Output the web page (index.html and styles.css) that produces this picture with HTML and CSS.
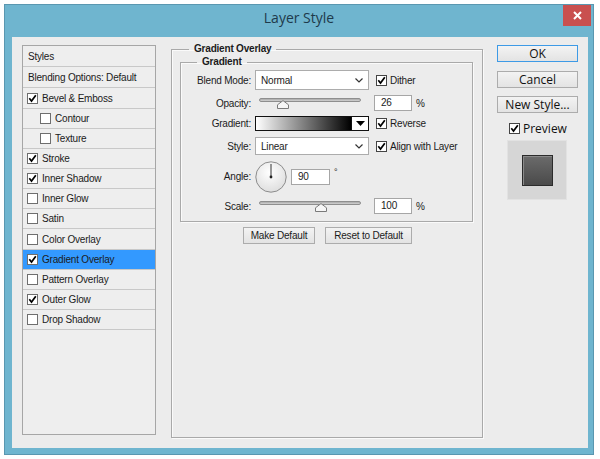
FILE: index.html
```html
<!DOCTYPE html>
<html>
<head>
<meta charset="utf-8">
<title>Layer Style</title>
<link rel="stylesheet" href="styles.css">
</head>
<body>
<div class="window">
  <div class="titlebar">
    <div></div>
    <div class="title">Layer Style</div>
    <div class="close"><svg width="9" height="9" viewBox="0 0 9 9"><path d="M1 1 L8 8 M8 1 L1 8" stroke="#fff" stroke-width="2"/></svg></div>
  </div>
  <div class="content">
    <div class="styles-list">
      <div class="row h21">Styles</div>
      <div class="row h21">Blending Options: Default</div>
      <div class="row h21 cbrow"><span class="cb"><svg width="9" height="9" viewBox="0 0 9 9"><path d="M1.3 4.3 L3.5 7 L7.8 1.2" stroke="#000" stroke-width="1.7" fill="none"/></svg></span>Bevel &amp; Emboss</div>
      <div class="row cbrow sub"><span class="cb"></span>Contour</div>
      <div class="row cbrow sub"><span class="cb"></span>Texture</div>
      <div class="row cbrow"><span class="cb"><svg width="9" height="9" viewBox="0 0 9 9"><path d="M1.3 4.3 L3.5 7 L7.8 1.2" stroke="#000" stroke-width="1.7" fill="none"/></svg></span>Stroke</div>
      <div class="row cbrow"><span class="cb"><svg width="9" height="9" viewBox="0 0 9 9"><path d="M1.3 4.3 L3.5 7 L7.8 1.2" stroke="#000" stroke-width="1.7" fill="none"/></svg></span>Inner Shadow</div>
      <div class="row cbrow"><span class="cb"></span>Inner Glow</div>
      <div class="row cbrow"><span class="cb"></span>Satin</div>
      <div class="row h21 cbrow"><span class="cb"></span>Color Overlay</div>
      <div class="row cbrow selected"><span class="cb"><svg width="9" height="9" viewBox="0 0 9 9"><path d="M1.3 4.3 L3.5 7 L7.8 1.2" stroke="#000" stroke-width="1.7" fill="none"/></svg></span>Gradient Overlay</div>
      <div class="row cbrow"><span class="cb"></span>Pattern Overlay</div>
      <div class="row cbrow"><span class="cb"><svg width="9" height="9" viewBox="0 0 9 9"><path d="M1.3 4.3 L3.5 7 L7.8 1.2" stroke="#000" stroke-width="1.7" fill="none"/></svg></span>Outer Glow</div>
      <div class="row cbrow"><span class="cb"></span>Drop Shadow</div>
    </div>

    <fieldset class="panel">
      <legend>Gradient Overlay</legend>
      <fieldset class="group">
        <legend>Gradient</legend>
        <div class="frow r1">
          <div class="lbl">Blend Mode:</div>
          <div class="select"><span>Normal</span><svg width="8" height="5" viewBox="0 0 8 5"><path d="M0.5 0.5 L4 4 L7.5 0.5" stroke="#333" stroke-width="1.2" fill="none"/></svg></div>
          <div class="check"><span class="cb dark"><svg width="9" height="9" viewBox="0 0 9 9"><path d="M1.3 4.3 L3.5 7 L7.8 1.2" stroke="#000" stroke-width="1.7" fill="none"/></svg></span>Dither</div>
        </div>
        <div class="frow r2">
          <div class="lbl">Opacity:</div>
          <div class="slider"><div class="track"></div><svg class="thumb t-op" width="12" height="9" viewBox="0 0 12 9"><path d="M0.5 8.5 V4.8 L6 0.6 L11.5 4.8 V8.5 Z" fill="#f6f6f6" stroke="#7a7a7a"/></svg></div>
          <div class="field num">26</div>
          <div class="unit">%</div>
        </div>
        <div class="frow r3">
          <div class="lbl">Gradient:</div>
          <div class="grad"><div class="grad-fill"></div><div class="grad-btn"><svg width="9" height="5" viewBox="0 0 9 5"><path d="M0 0 H9 L4.5 5 Z" fill="#000"/></svg></div></div>
          <div class="check"><span class="cb dark"><svg width="9" height="9" viewBox="0 0 9 9"><path d="M1.3 4.3 L3.5 7 L7.8 1.2" stroke="#000" stroke-width="1.7" fill="none"/></svg></span>Reverse</div>
        </div>
        <div class="frow r4">
          <div class="lbl">Style:</div>
          <div class="select"><span>Linear</span><svg width="8" height="5" viewBox="0 0 8 5"><path d="M0.5 0.5 L4 4 L7.5 0.5" stroke="#333" stroke-width="1.2" fill="none"/></svg></div>
          <div class="check"><span class="cb dark"><svg width="9" height="9" viewBox="0 0 9 9"><path d="M1.3 4.3 L3.5 7 L7.8 1.2" stroke="#000" stroke-width="1.7" fill="none"/></svg></span>Align with Layer</div>
        </div>
        <div class="frow r5">
          <div class="lbl">Angle:</div>
          <svg class="dial" width="32" height="32" viewBox="0 0 32 32">
            <defs><radialGradient id="dg" cx="0.45" cy="0.35" r="0.7"><stop offset="0" stop-color="#ffffff"/><stop offset="1" stop-color="#dcdcdc"/></radialGradient></defs>
            <circle cx="16" cy="16" r="15.2" fill="url(#dg)" stroke="#8c8c8c"/>
            <path d="M16 16 V3" stroke="#333" stroke-width="1"/>
            <circle cx="16" cy="16" r="1.4" fill="#222"/>
          </svg>
          <div class="field angle">90</div>
          <div class="deg">°</div>
        </div>
        <div class="frow r6">
          <div class="lbl">Scale:</div>
          <div class="slider"><div class="track"></div><svg class="thumb t-sc" width="12" height="9" viewBox="0 0 12 9"><path d="M0.5 8.5 V4.8 L6 0.6 L11.5 4.8 V8.5 Z" fill="#f6f6f6" stroke="#7a7a7a"/></svg></div>
          <div class="field num">100</div>
          <div class="unit">%</div>
        </div>
      </fieldset>
      <div class="defaults">
        <div class="btn small b-make">Make Default</div>
        <div class="btn small b-reset">Reset to Default</div>
      </div>
    </fieldset>

    <div class="side">
      <div class="btn big ok">OK</div>
      <div class="btn big">Cancel</div>
      <div class="btn big">New Style...</div>
      <div class="preview-check"><span class="cb dark"><svg width="9" height="9" viewBox="0 0 9 9"><path d="M1.3 4.3 L3.5 7 L7.8 1.2" stroke="#000" stroke-width="1.7" fill="none"/></svg></span>Preview</div>
      <div class="preview-box"><div class="swatch"></div></div>
    </div>
  </div>
</div>
</body>
</html>
```

FILE: styles.css
```css
* { box-sizing: border-box; }
html, body { margin: 0; padding: 0; background: #ffffff; }
body {
  font-family: "Liberation Sans", Arial, sans-serif;
  font-size: 10px;
  letter-spacing: -0.2px;
  color: #1b1b1b;
}

.window {
  margin: 4px;
  width: 590px;
  height: 451px;
  border: 1px solid #5a97b0;
  background: #6fb5cf;
  display: flex;
  flex-direction: column;
}

.titlebar {
  height: 32px;
  display: grid;
  grid-template-columns: 1fr auto 1fr;
  align-items: start;
}
.title {
  font-family: "Open Sans", "Noto Sans", sans-serif;
  font-size: 14px;
  letter-spacing: 0;
  line-height: 20px;
  padding-top: 3px;
  color: #1e3a4b;
}
.close {
  justify-self: end;
  margin-right: 2px;
  width: 28px;
  height: 21px;
  background: #c9504f;
  display: flex;
  align-items: center;
  justify-content: center;
}

.content {
  flex: 1;
  margin: 0 5px 6px 7px;
  background: #ececec;
  display: flex;
  align-items: flex-start;
}

/* left list */
.styles-list {
  margin: 8px 0 0 10px;
  width: 134px;
  height: 390px;
  border: 1px solid #a6a6a6;
  background: #eeeeee;
  flex: none;
}
.row {
  height: 20px;
  border-bottom: 1px solid #c8c8c8;
  display: flex;
  align-items: center;
  padding-left: 5px;
  white-space: nowrap;
}
.row.h21 { height: 21px; }
.row.cbrow { padding-left: 4px; }
.row.sub { padding-left: 17px; }
.row.selected { background: #3399ff; }

.cb {
  width: 11px;
  height: 11px;
  border: 1px solid #6e6e6e;
  background: #ffffff;
  margin-right: 4px;
  display: flex;
  align-items: center;
  justify-content: center;
  flex: none;
}
.cb.dark { border-color: #444; }

/* middle panel */
.panel {
  margin: 6px 0 0 15px;
  width: 312px;
  height: 395px;
  border: 1px solid #a9a9a9;
  box-shadow: inset 1px 1px 0 #fafafa, 1px 1px 0 #fafafa;
  padding: 0 9px 0 8px;
  flex: none;
  min-width: 0;
}
.panel > legend {
  font-weight: bold;
  line-height: 12px;
  padding: 0 5px;
  margin-left: 9px;
}
.group {
  margin: 1px 0 0 0;
  width: 293px;
  border: 1px solid #a9a9a9;
  box-shadow: inset 1px 1px 0 #fafafa, 1px 1px 0 #fafafa;
  padding: 2px 0 7px 0;
  min-width: 0;
}
.group > legend {
  font-weight: bold;
  line-height: 12px;
  padding: 0 5px;
  margin-left: 16px;
}

.frow {
  display: flex;
  align-items: center;
  white-space: nowrap;
}
.r1 { height: 20px; margin-bottom: 5px; }
.r2 { height: 16px; margin-bottom: 5px; }
.r3 { height: 15px; margin-bottom: 6px; }
.r4 { height: 18px; margin-bottom: 6px; }
.r5 { height: 31px; margin-bottom: 6px; }
.r6 { height: 16px; }

.lbl {
  width: 70px;
  text-align: right;
  flex: none;
}

.select {
  margin-left: 4px;
  width: 114px;
  height: 100%;
  background: #ffffff;
  border: 1px solid #acacac;
  display: flex;
  align-items: center;
  justify-content: space-between;
  padding: 0 5px 0 5px;
  flex: none;
}

.check {
  margin-left: 7px;
  display: flex;
  align-items: center;
}
.check .cb { margin-right: 3px; }

.slider {
  margin-left: 4px;
  width: 114px;
  height: 16px;
  position: relative;
  flex: none;
  align-self: flex-start;
}
.track {
  margin: 3px 0 0 4px;
  width: 102px;
  height: 4px;
  border-radius: 2px;
  border: 1px solid #8e8e8e;
  background: linear-gradient(#a9a9a9, #d2d2d2);
}
.thumb { position: absolute; top: 5px; }
.t-op { left: 22px; }
.t-sc { left: 60px; }

.field {
  height: 16px;
  background: #ffffff;
  border: 1px solid #a6a6a6;
  line-height: 14px;
  padding-left: 6px;
  flex: none;
}
.field.num { width: 38px; margin-left: 5px; }
.field.angle { width: 39px; margin-left: 4px; }
.unit { margin-left: 4px; }
.deg { margin-left: 4px; align-self: flex-start; margin-top: 6px; font-size: 9px; }

.grad {
  margin-left: 4px;
  width: 114px;
  height: 15px;
  border: 1px solid #111;
  display: flex;
  flex: none;
}
.grad-fill {
  flex: 1;
  background: linear-gradient(to right, #ffffff, #000000);
}
.grad-btn {
  width: 17px;
  border-left: 1px solid #111;
  background: #ffffff;
  display: flex;
  align-items: center;
  justify-content: center;
}

.dial { margin-left: 4px; flex: none; }

.defaults {
  margin: 5px 0 0 63px;
  display: flex;
}
.btn {
  border: 1px solid #acacac;
  background: linear-gradient(#f3f3f3, #e3e3e3);
  display: flex;
  align-items: center;
  justify-content: center;
  white-space: nowrap;
}
.btn.small { height: 17px; }
.b-make { width: 72px; }
.b-reset { width: 87px; margin-left: 10px; }

/* right column */
.side {
  margin: 8px 0 0 14px;
  width: 81px;
  display: flex;
  flex-direction: column;
  flex: none;
}
.btn.big {
  height: 17px;
  font-family: "Open Sans", "Noto Sans", sans-serif;
  font-size: 12px;
  letter-spacing: 0;
  color: #111;
  margin-bottom: 8px;
}
.btn.big.ok {
  border-color: #3d9ae6;
  margin-bottom: 9px;
}
.preview-check {
  margin: 1px 0 0 12px;
  height: 12px;
  display: flex;
  align-items: center;
  font-family: "Open Sans", "Noto Sans", sans-serif;
  font-size: 12px;
  letter-spacing: 0;
  color: #111;
}
.preview-check .cb { margin-right: 3px; }
.preview-box {
  margin: 6px 0 0 10px;
  width: 60px;
  height: 60px;
  background: #d6d6d6;
  border: 1px solid #e2e2e2;
  display: flex;
  align-items: center;
  justify-content: center;
}
.swatch {
  width: 31px;
  height: 31px;
  border: 1px solid #2b2b2b;
  background: linear-gradient(#6b6b6b, #4a4a4a);
  box-shadow: inset 1px 1px 0 #8a8a8a;
}
```
